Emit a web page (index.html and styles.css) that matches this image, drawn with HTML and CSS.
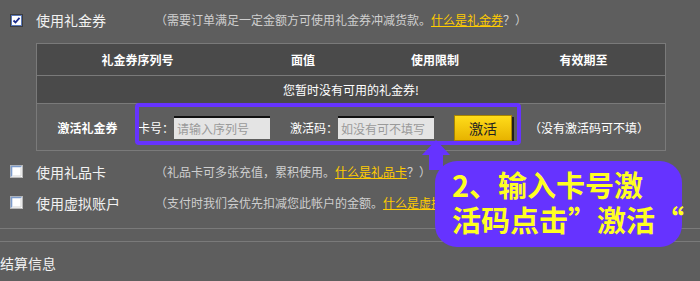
FILE: index.html
```html
<!DOCTYPE html>
<html lang="zh-CN">
<head>
<meta charset="utf-8">
<title>礼金券</title>
<link rel="stylesheet" href="styles.css">
</head>
<body>
<div class="page">
  <div class="opt opt-main">
    <span class="cb">
      <svg width="13" height="13" viewBox="0 0 13 13">
        <rect x="0.5" y="0.5" width="12" height="12" fill="none" stroke="#1a1a1a" stroke-dasharray="1 1"/>
        <rect x="1.5" y="1.5" width="10" height="10" fill="#e8eefa" stroke="#5a78b8"/>
        <rect x="2" y="2" width="9" height="9" fill="#fff"/>
        <path d="M3.5 6.5 L5.5 8.5 L9.5 3.8" fill="none" stroke="#1b2a8a" stroke-width="1.8"/>
      </svg>
    </span>
    <span class="opt-label">使用礼金券</span>
    <span class="hint">（需要订单满足一定金额方可使用礼金券冲减货款。<a class="link">什么是礼金券</a>？）</span>
  </div>

  <div class="coupon">
    <div class="crow chead">
      <div>礼金券序列号</div>
      <div>面值</div>
      <div>使用限制</div>
      <div>有效期至</div>
    </div>
    <div class="crow cempty">您暂时没有可用的礼金券!</div>
    <div class="crow cact">
      <div class="act-label">激活礼金券</div>
      <label class="field">卡号：<input class="inp" type="text" placeholder="请输入序列号"></label>
      <label class="field field-code">激活码：<input class="inp" type="text" placeholder="如没有可不填写"></label>
      <button class="btn" type="button">激活</button>
      <span class="act-note">（没有激活码可不填）</span>
    </div>
  </div>

  <div class="opts">
    <div class="opt">
      <span class="cb">
        <svg width="13" height="13" viewBox="0 0 13 13">
          <rect x="0" y="0" width="13" height="13" fill="#f4f4f4"/>
          <rect x="0.5" y="0.5" width="12" height="12" fill="#fff" stroke="#b8b8b8"/>
          <path d="M1.5 11.5 V1.5 H11.5" fill="none" stroke="#7d9ccc" stroke-width="1.6"/>
          <path d="M2.5 11 H11 V2.5" fill="none" stroke="#d4d4d4"/>
        </svg>
      </span>
      <span class="opt-label">使用礼品卡</span>
      <span class="hint">（礼品卡可多张充值，累积使用。<a class="link">什么是礼品卡</a>？）</span>
    </div>
    <div class="opt">
      <span class="cb">
        <svg width="13" height="13" viewBox="0 0 13 13">
          <rect x="0" y="0" width="13" height="13" fill="#f4f4f4"/>
          <rect x="0.5" y="0.5" width="12" height="12" fill="#fff" stroke="#b8b8b8"/>
          <path d="M1.5 11.5 V1.5 H11.5" fill="none" stroke="#7d9ccc" stroke-width="1.6"/>
          <path d="M2.5 11 H11 V2.5" fill="none" stroke="#d4d4d4"/>
        </svg>
      </span>
      <span class="opt-label">使用虚拟账户</span>
      <span class="hint">（支付时我们会优先扣减您此帐户的金额。<a class="link">什么是虚拟账户</a>？）</span>
    </div>
  </div>

  <div class="rule rule-first"></div>
  <div class="rule rule-second"></div>
  <div class="section">结算信息</div>

  <div class="highlight"></div>
  <svg class="arrow" width="32" height="32" viewBox="0 0 32 32">
    <polygon points="16,2 30,17 23,17 23,32 9,32 9,17 2,17" fill="#6633ff"/>
  </svg>
  <div class="callout">2、输入卡号激<br>活码点击”激活“</div>
</div>
</body>
</html>
```

FILE: styles.css
```css
html, body {
  margin: 0;
  padding: 0;
  background: #5e5e5e;
}

body {
  font-family: "Noto Sans CJK SC", "Noto Sans", sans-serif;
  color: #f2f2f2;
}

.page {
  position: relative;
  width: 700px;
  height: 281px;
  overflow: hidden;
}

/* option rows */
.opt {
  display: flex;
  align-items: center;
  height: 31px;
  padding-left: 10px;
}

.opt-main {
  height: 40px;
}

.cb {
  display: flex;
  width: 13px;
  height: 13px;
}

.opt-label {
  width: 119px;
  margin-left: 13px;
  font-size: 14px;
  line-height: 18px;
  color: #f2f2f2;
  white-space: nowrap;
}

.hint {
  font-size: 12px;
  line-height: 16px;
  color: #cfcfcf;
  white-space: nowrap;
}

.link {
  color: #ffcc00;
  text-decoration: underline;
}

/* coupon table */
.coupon {
  margin: 3px 0 0 36px;
  width: 630px;
  box-sizing: border-box;
  border: 1px solid #7a7a7a;
}

.crow {
  box-sizing: border-box;
}

.chead {
  display: grid;
  grid-template-columns: 201px 130px 134px 163px;
  height: 32px;
  align-items: center;
  background: #4a4a4a;
  border-bottom: 1px solid #7a7a7a;
  font-size: 12px;
  font-weight: 700;
  color: #ffffff;
  text-align: center;
}

.cempty {
  height: 28px;
  line-height: 27px;
  background: #4a4a4a;
  border-bottom: 1px solid #7a7a7a;
  font-size: 12px;
  color: #ffffff;
  text-align: center;
}

.cact {
  display: flex;
  align-items: center;
  height: 46px;
  font-size: 12px;
  color: #ffffff;
}

.act-label {
  width: 101px;
  text-align: center;
  font-weight: 700;
  font-size: 12px;
}

.field {
  display: flex;
  align-items: center;
  white-space: nowrap;
}

.field-code {
  margin-left: 20px;
}

.inp {
  box-sizing: border-box;
  width: 96px;
  height: 23px;
  margin: 0;
  padding: 0 0 0 3px;
  border: none;
  border-top: 2px solid #111111;
  background: #e4e4e4;
  font-family: "Noto Sans CJK SC", sans-serif;
  font-size: 12px;
  color: #333333;
  outline: none;
}

.inp::placeholder {
  color: #9a9a9a;
}

.btn {
  box-sizing: border-box;
  width: 58px;
  height: 26px;
  margin: 1px 0 0 20px;
  padding: 0;
  border: 1px solid #a88400;
  background: linear-gradient(#ffdc1a, #e7b300);
  box-shadow: 2px 2px 0 #1e1e1e;
  font-family: "Noto Sans CJK SC", sans-serif;
  font-size: 14px;
  color: #222222;
}

.act-note {
  margin-left: 17px;
  white-space: nowrap;
}

/* lower options */
.opts {
  padding-top: 5px;
}

.rule {
  border-top: 1px solid #7a7a7a;
}

.rule-first {
  margin-top: 10px;
}

.rule-second {
  margin-top: 12px;
}

.section {
  margin-top: 11px;
  font-size: 14px;
  line-height: 20px;
  color: #f2f2f2;
}

/* overlays: annotation */
.highlight {
  position: absolute;
  left: 135px;
  top: 103px;
  width: 386px;
  height: 42px;
  box-sizing: border-box;
  border: 4px solid #6633ff;
  border-radius: 4px;
}

.arrow {
  position: absolute;
  left: 420px;
  top: 138px;
}

.callout {
  position: absolute;
  left: 435px;
  top: 161px;
  width: 247px;
  height: 86px;
  box-sizing: border-box;
  padding: 6px 0 0 17px;
  background: #6633ff;
  border-radius: 22px;
  color: #ffff22;
  font-size: 29px;
  font-weight: 700;
  line-height: 35px;
  white-space: nowrap;
}
```
